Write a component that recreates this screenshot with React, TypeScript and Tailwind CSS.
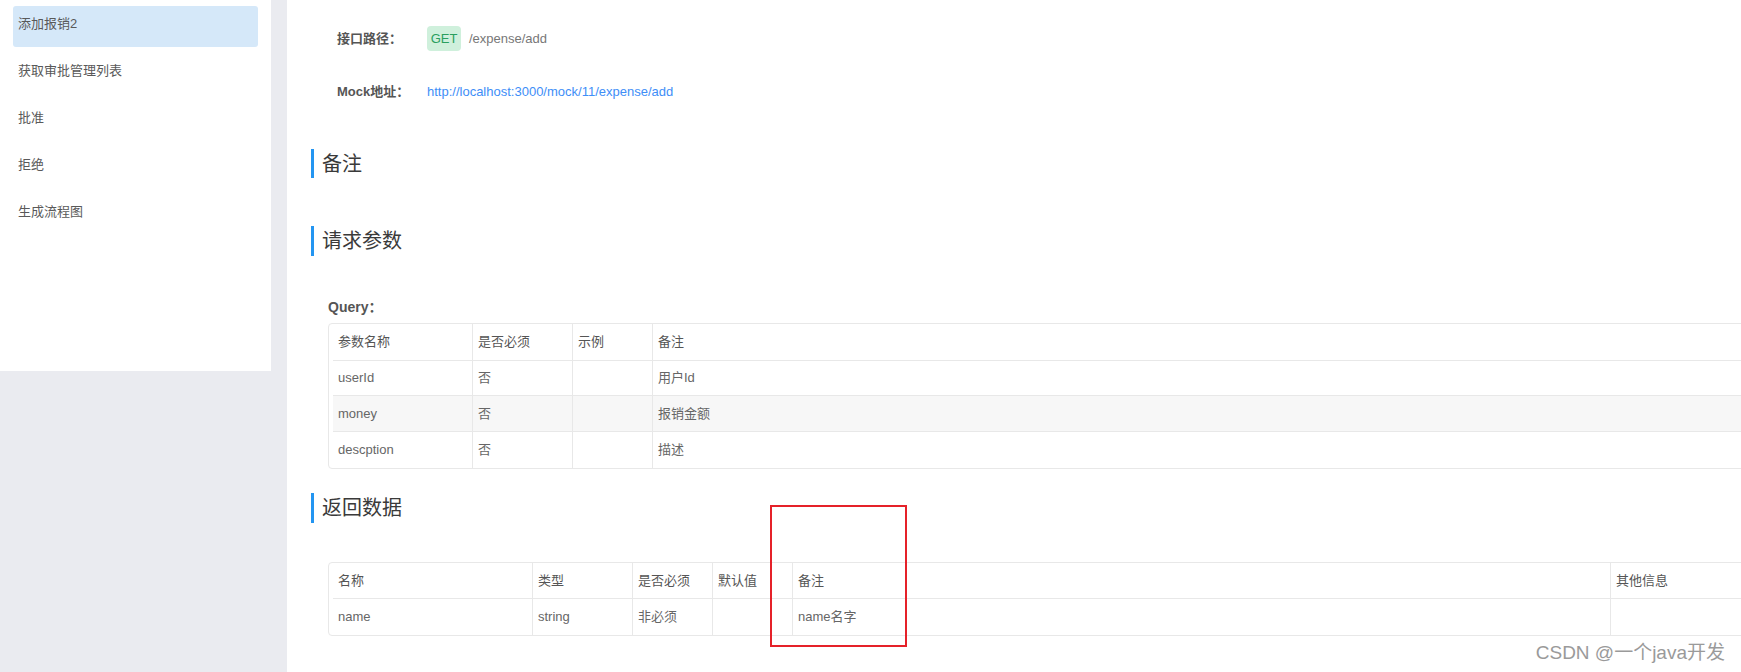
import React from "react";

const FONT = { fontFamily: '"Liberation Sans", "Noto Sans CJK SC", sans-serif' };

const menu = ["添加报销2", "获取审批管理列表", "批准", "拒绝", "生成流程图"];

function Heading({ text, h }: { text: string; h: string }) {
  return (
    <div className={`flex items-stretch ${h}`}>
      <div className="w-[3px] bg-[#2395f1]" />
      <div className="ml-[8px] flex items-center text-[20px] text-[#3a3a3a] leading-none">{text}</div>
    </div>
  );
}

type Col = { w: string };

function Row({
  cells,
  cols,
  h,
  last,
  striped,
  header,
}: {
  cells: string[];
  cols: Col[];
  h: string;
  last?: boolean;
  striped?: boolean;
  header?: boolean;
}) {
  return (
    <div
      className={`flex ${h} ${last ? "" : "border-b border-[#e8e8e8]"} ${striped ? "bg-[#f7f7f7]" : ""}`}
    >
      {cols.map((c, i) => (
        <div
          key={i}
          className={`${c.w} shrink-0 flex items-center pl-[5px] text-[13px] ${
            header ? "text-[#555]" : "text-[#666]"
          } ${i === 0 ? "" : "border-l border-[#e8e8e8]"}`}
        >
          {cells[i]}
        </div>
      ))}
    </div>
  );
}

export default function App() {
  const qCols: Col[] = [{ w: "w-[139px]" }, { w: "w-[100px]" }, { w: "w-[80px]" }, { w: "w-[1100px]" }];
  const rCols: Col[] = [
    { w: "w-[199px]" },
    { w: "w-[100px]" },
    { w: "w-[80px]" },
    { w: "w-[80px]" },
    { w: "w-[818px]" },
    { w: "w-[300px]" },
  ];
  return (
    <div className="relative flex w-[1741px] h-[672px] overflow-hidden bg-[#eaebf0]" style={FONT}>
      {/* Sidebar */}
      <div className="w-[287px] shrink-0">
        <div className="w-[271px] h-[371px] bg-white pt-[6px]">
          {menu.map((m, i) => (
            <div
              key={m}
              className={`mx-[13px] h-[41px] mb-[6px] rounded-[3px] pl-[5px] pt-[8px] text-[13px] leading-[20px] text-[#595959] ${
                i === 0 ? "bg-[#d5e8f9]" : ""
              }`}
            >
              {m}
            </div>
          ))}
        </div>
      </div>

      {/* Main */}
      <div className="flex-1 min-w-0 bg-white pl-[24px] pt-[26px]">
        <div className="pl-[26px]">
          <div className="flex items-center h-[25px]">
            <div className="w-[90px] text-[13px] font-semibold text-[#555]">接口路径：</div>
            <div className="w-[34px] h-[25px] rounded-[4px] bg-[#cff0dc] text-[#2a9f5f] text-[13px] flex items-center justify-center">
              GET
            </div>
            <div className="ml-[8px] text-[13px] text-[#777]">/expense/add</div>
          </div>
          <div className="flex items-center h-[25px] mt-[28px]">
            <div className="w-[90px] text-[13px] font-semibold text-[#555]">Mock地址：</div>
            <div className="text-[13px] text-[#3e8ef7]">http://localhost:3000/mock/11/expense/add</div>
          </div>
        </div>

        <div className="mt-[45px]">
          <Heading text="备注" h="h-[29px]" />
        </div>
        <div className="mt-[48px]">
          <Heading text="请求参数" h="h-[30px]" />
        </div>

        <div className="pl-[17px]">
          <div className="mt-[41px] text-[14px] leading-[20px] font-semibold text-[#555]">Query：</div>
          <div className="mt-[6px] w-[1500px] border border-[#e8e8e8] rounded-[4px] pl-[4px] overflow-hidden">
            <Row header cells={["参数名称", "是否必须", "示例", "备注"]} cols={qCols} h="h-[37px]" />
            <Row cells={["userId", "否", "", "用户Id"]} cols={qCols} h="h-[35px]" />
            <Row striped cells={["money", "否", "", "报销金额"]} cols={qCols} h="h-[36px]" />
            <Row last cells={["descption", "否", "", "描述"]} cols={qCols} h="h-[36px]" />
          </div>
        </div>

        <div className="mt-[24px]">
          <Heading text="返回数据" h="h-[30px]" />
        </div>

        <div className="pl-[17px]">
          <div className="mt-[39px] w-[1500px] border border-[#e8e8e8] rounded-[4px] pl-[4px] overflow-hidden">
            <Row header cells={["名称", "类型", "是否必须", "默认值", "备注", "其他信息"]} cols={rCols} h="h-[36px]" />
            <Row last cells={["name", "string", "非必须", "", "name名字", ""]} cols={rCols} h="h-[36px]" />
          </div>
        </div>
      </div>

      {/* Red annotation box */}
      <div className="absolute left-[770px] top-[505px] w-[137px] h-[142px] border-2 border-[#e52129]" />

      {/* Watermark */}
      <div className="absolute right-[16px] bottom-[8px] text-[19px] leading-[22px] text-[#9a9a9a] [text-shadow:0_0_2px_#fff]">
        CSDN @一个java开发
      </div>
    </div>
  );
}
